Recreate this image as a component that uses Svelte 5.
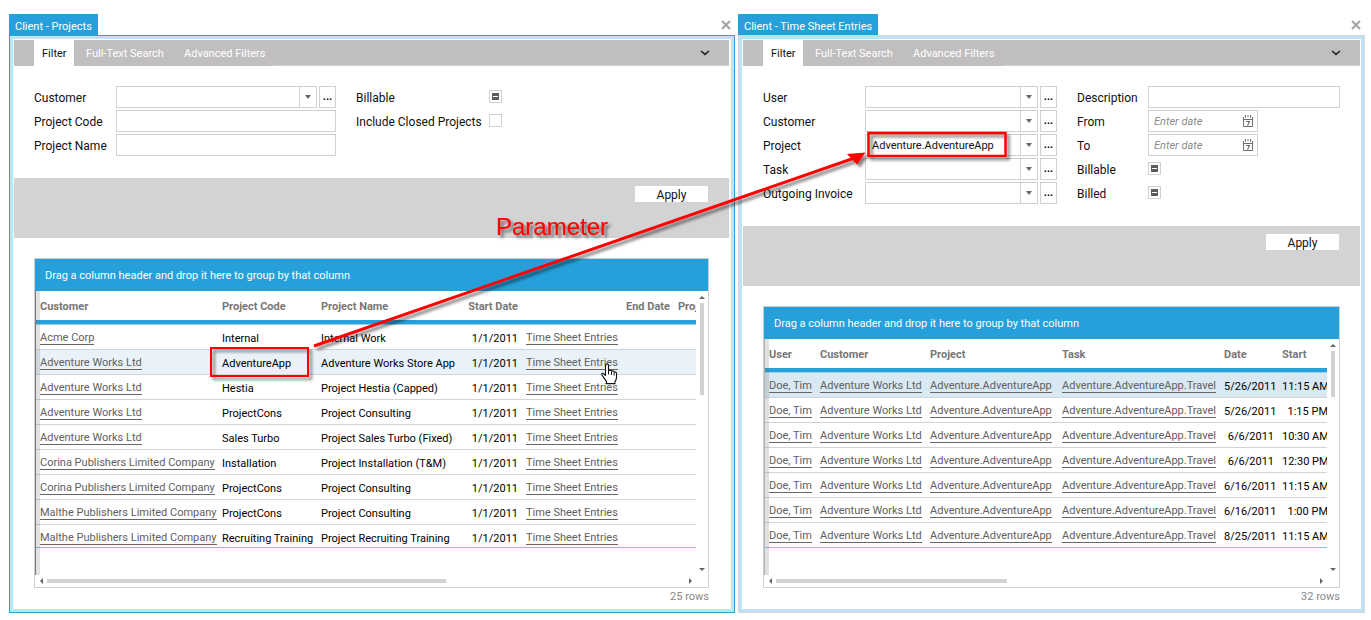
<script>
  const tabs = ['Filter', 'Full-Text Search', 'Advanced Filters'];

  const projectColumns = [
    { title: 'Customer', width: 182, link: true },
    { title: 'Project Code', width: 99 },
    { title: 'Project Name', width: 144 },
    { title: 'Start Date', width: 61, right: true },
    { title: '', width: 97, link: true },
    { title: 'End Date', width: 55, right: true },
    { title: 'Proj', width: 96 }
  ];
  const projectRows = [
    ['Acme Corp', 'Internal', 'Internal Work'],
    ['Adventure Works Ltd', 'AdventureApp', 'Adventure Works Store App'],
    ['Adventure Works Ltd', 'Hestia', 'Project Hestia (Capped)'],
    ['Adventure Works Ltd', 'ProjectCons', 'Project Consulting'],
    ['Adventure Works Ltd', 'Sales Turbo', 'Project Sales Turbo (Fixed)'],
    ['Corina Publishers Limited Company', 'Installation', 'Project Installation (T&M)'],
    ['Corina Publishers Limited Company', 'ProjectCons', 'Project Consulting'],
    ['Malthe Publishers Limited Company', 'ProjectCons', 'Project Consulting'],
    ['Malthe Publishers Limited Company', 'Recruiting Training', 'Project Recruiting Training']
  ].map((r) => [...r, '1/1/2011', 'Time Sheet Entries', '', '']);

  const entryColumns = [
    { title: 'User', width: 51, link: true },
    { title: 'Customer', width: 110, link: true },
    { title: 'Project', width: 132, link: true },
    { title: 'Task', width: 162, link: true },
    { title: 'Date', width: 58, right: true, leftHead: true },
    { title: 'Start', width: 54, right: true, leftHead: true }
  ];
  const entryRows = [
    ['5/26/2011', '11:15 AM'],
    ['5/26/2011', '1:15 PM'],
    ['6/6/2011', '10:30 AM'],
    ['6/6/2011', '12:30 PM'],
    ['6/16/2011', '11:15 AM'],
    ['6/16/2011', '1:00 PM'],
    ['8/25/2011', '11:15 AM']
  ].map((r) => ['Doe, Tim', 'Adventure Works Ltd', 'Adventure.AdventureApp', 'Adventure.AdventureApp.Travel', ...r]);
</script>

{#snippet titleBar(title)}
  <header class="title-bar">
    <h2>{title}</h2>
    <button class="close" aria-label="Close">
      <svg width="10" height="10" viewBox="0 0 10 10"><path d="M1 1l8 8M9 1L1 9" stroke="#a3a3a3" stroke-width="2" /></svg>
    </button>
  </header>
{/snippet}

{#snippet tabStrip()}
  <div class="tabs">
    {#each tabs as tab, i}
      <button class="tab" class:active={i === 0}>{tab}</button>
    {/each}
    <div class="tab-rest">
      <button class="collapse" aria-label="Collapse">
        <svg width="10" height="6" viewBox="0 0 10 6"><path d="M1 1l4 3.4L9 1" fill="none" stroke="#222" stroke-width="1.6" /></svg>
      </button>
    </div>
  </div>
{/snippet}

{#snippet combo(id, label, value)}
  <label for={id}>{label}</label>
  <div class="combo">
    <div class="select">
      <select {id}><option>{value}</option></select>
      <svg class="drop" width="6" height="4" viewBox="0 0 6 4"><path d="M0 0h6L3 4z" fill="#666" /></svg>
    </div>
    <button class="more" aria-label="Browse {label}">...</button>
  </div>
{/snippet}

{#snippet text(id, label)}
  <label for={id}>{label}</label>
  <input {id} class="box" type="text" />
{/snippet}

{#snippet date(id, label)}
  <label for={id}>{label}</label>
  <div class="box date">
    <input {id} type="text" placeholder="Enter date" />
    <button aria-label="Open calendar">
      <svg width="10" height="12" viewBox="0 0 10 12">
        <path d="M.5 2v9.500h9V2M0 4.500h10" fill="none" stroke="#6e6e6e" />
        <path d="M2.500 0v3M5 0v2M7.500 0v3" stroke="#6e6e6e" />
        <path d="M3 6.500h3.500L4.500 10.500" fill="none" stroke="#6e6e6e" stroke-width="1.200" />
      </svg>
    </button>
  </div>
{/snippet}

{#snippet check(id, label, mixed)}
  <label for={id}>{label}</label>
  <input {id} class="check" type="checkbox" indeterminate={mixed} />
{/snippet}

{#snippet grid(columns, rows, highlighted, count, hThumb, vThumb)}
  <div class="grid-wrap">
    <div class="grid">
      <div class="group-bar">Drag a column header and drop it here to group by that column</div>
      <div class="grid-main">
        <div class="viewport">
          <div class="rows">
            <table>
              <colgroup>
                {#each columns as c}<col style:width="{c.width}px" />{/each}
              </colgroup>
              <thead>
                <tr>
                  {#each columns as c}<th class:right={c.right && !c.leftHead}>{c.title}</th>{/each}
                </tr>
              </thead>
              <tbody>
                {#each rows as row, i}
                  <tr class:highlighted={i === highlighted}>
                    {#each row as cell, j}
                      <td class:right={columns[j].right} class:linked={columns[j].link}>
                        {#if columns[j].link}<a href="#top">{cell}</a>{:else}{cell}{/if}
                      </td>
                    {/each}
                  </tr>
                {/each}
              </tbody>
            </table>
          </div>
          <div class="indicator"></div>
        </div>
        <div class="v-scroll">
          <svg width="6" height="3" viewBox="0 0 6 3"><path d="M0 3L3 0l3 3z" fill="#666" /></svg>
          <div class="track"><div class="thumb" style:height="{vThumb}%"></div></div>
          <svg width="6" height="3" viewBox="0 0 6 3"><path d="M0 0h6L3 3z" fill="#666" /></svg>
        </div>
      </div>
      <div class="h-scroll">
        <svg width="3" height="6" viewBox="0 0 3 6"><path d="M3 0v6L0 3z" fill="#666" /></svg>
        <div class="track"><div class="thumb" style:width="{hThumb}%"></div></div>
        <svg width="3" height="6" viewBox="0 0 3 6"><path d="M0 0v6l3-3z" fill="#666" /></svg>
      </div>
    </div>
    <p class="count">{count} rows</p>
  </div>
{/snippet}

<main>
  <section class="panel projects">
    {@render titleBar('Client - Projects')}
    <div class="frame">
      <div class="content">
        {@render tabStrip()}
        <form class="filters">
          <div class="fields">
            {@render combo('p-customer', 'Customer', '')}
            {@render text('p-code', 'Project Code')}
            {@render text('p-name', 'Project Name')}
          </div>
          <div class="fields">
            {@render check('p-billable', 'Billable', true)}
            {@render check('p-closed', 'Include Closed Projects', false)}
          </div>
        </form>
        <div class="actions"><button>Apply</button></div>
        {@render grid(projectColumns, projectRows, 1, 25, 62.5, 35.4)}
      </div>
    </div>
  </section>

  <section class="panel entries">
    {@render titleBar('Client - Time Sheet Entries')}
    <div class="frame">
      <div class="content">
        {@render tabStrip()}
        <form class="filters">
          <div class="fields">
            {@render combo('e-user', 'User', '')}
            {@render combo('e-customer', 'Customer', '')}
            {@render combo('e-project', 'Project', 'Adventure.AdventureApp')}
            {@render combo('e-task', 'Task', '')}
            {@render combo('e-invoice', 'Outgoing Invoice', '')}
          </div>
          <div class="fields">
            {@render text('e-description', 'Description')}
            {@render date('e-from', 'From')}
            {@render date('e-to', 'To')}
            {@render check('e-billable', 'Billable', true)}
            {@render check('e-billed', 'Billed', true)}
          </div>
        </form>
        <div class="actions"><button>Apply</button></div>
        {@render grid(entryColumns, entryRows, 0, 32, 42.8, 21.7)}
      </div>
    </div>
  </section>

  <svg class="annotation" width="1371" height="620" viewBox="0 0 1371 620">
    <defs>
      <filter id="shadow" filterUnits="userSpaceOnUse" x="0" y="0" width="1371" height="620">
        <feDropShadow dx="3" dy="3" stdDeviation="1.500" flood-color="#000" flood-opacity="0.5" />
      </filter>
    </defs>
    <g filter="url(#shadow)">
      <rect x="211" y="348" width="97" height="28" fill="none" stroke="#f00" stroke-width="2" />
      <rect x="868.500" y="133" width="137" height="23" fill="none" stroke="#f00" stroke-width="2.500" />
      <path d="M314 346L853 158.500" stroke="#f00" stroke-width="3" />
      <path d="M847 154l18.500-1.500L857 164.500z" fill="#f00" />
      <text x="496" y="235">Parameter</text>
    </g>
    <path
      d="M605.500 375.500V365.500q0-1.500 1.500-1.500t1.500 1.500v5q2.300-1 3 .6 2.200-.8 2.700 1 2.300-.6 2.300 1.500v4q0 2-1.500 4v2h-8.500v-2l-4.500-6.500q-.8-2.200 1.200-1.800z"
      fill="#fff" stroke="#111" stroke-width="1.100" stroke-linejoin="round" />
    <path d="M608.500 370v4.500M611.500 371.500v3.500M614.200 372.500v3" stroke="#111" fill="none" />
  </svg>
</main>

<style>
  :global(body) {
    background: #fff;
  }
  main {
    position: relative;
    display: flex;
    gap: 3px;
    padding: 14px 6px 7px 9px;
    color: #111;
    font: 11px/16px Roboto, 'Open Sans', sans-serif;
    overflow: hidden;
  }
  main * {
    box-sizing: border-box;
  }
  button,
  input,
  select {
    font: inherit;
    color: inherit;
    border: 0;
    padding: 0;
    margin: 0;
    background: none;
    border-radius: 0;
  }
  svg {
    display: block;
  }
  .panel {
    display: flex;
    flex-direction: column;
    min-width: 0;
  }
  .projects {
    flex: 726 1 0;
    --edge: #34a0d8;
    --strip: #7a7a7a;
  }
  .entries {
    flex: 627 1 0;
    --edge: #d4d4d6;
    --strip: #b4b4b4;
  }
  .title-bar {
    display: flex;
    justify-content: space-between;
    align-items: center;
    height: 21px;
  }
  h2 {
    margin: 0;
    padding: 2px 6px;
    height: 21px;
    line-height: 21px;
    background: #26a0da;
    color: #fff;
    font-size: 11px;
    font-weight: 400;
  }
  .close {
    padding: 0 4px;
  }
  .frame {
    flex: 1;
    border: 1px solid var(--edge);
  }
  .content {
    height: 100%;
    border: 3px solid #bfe2f4;
    padding: 1px;
  }
  .projects .content {
    padding-right: 2px;
  }
  .tabs {
    display: flex;
    height: 26px;
    padding-left: 20px;
    background: #c0bebf;
  }
  .tab {
    min-width: 98px;
    padding: 2px 8px 0 12px;
    color: #fff;
    text-align: left;
    white-space: nowrap;
  }
  .tab.active {
    min-width: 40px;
    padding: 2px 7px 0 8px;
    background: #fff;
    color: #111;
  }
  .tab-rest {
    flex: 1;
    display: flex;
    justify-content: flex-end;
    align-items: center;
    padding-right: 19px;
    border-bottom: 1px solid #d2d2d2;
  }
  .filters {
    display: flex;
    gap: 20px;
    padding: 20px 20px 22px;
    font-size: 12px;
  }
  .fields {
    display: grid;
    grid-auto-rows: 22px;
    align-content: start;
    align-items: center;
    row-gap: 2px;
  }
  .projects .fields:first-child {
    grid-template-columns: 82px 220px;
  }
  .projects .fields:last-child {
    grid-template-columns: 133px 13px;
  }
  .entries .fields:first-child {
    grid-template-columns: 102px 192px;
  }
  .entries .fields:last-child {
    flex: 1;
    grid-template-columns: 71px 1fr;
  }
  label {
    padding-top: 2px;
    white-space: nowrap;
  }
  .box {
    width: 100%;
    height: 22px;
    border: 1px solid #d0d0d0;
    padding: 0 5px;
    font-size: 11px;
  }
  .combo {
    display: flex;
    gap: 2px;
    font-size: 11px;
  }
  .select {
    display: grid;
    grid-template-columns: 1fr 17px;
    align-items: center;
    flex: 1;
    border: 1px solid #d0d0d0;
  }
  .select > * {
    grid-row: 1;
  }
  .drop {
    grid-column: 2;
    justify-self: center;
    pointer-events: none;
  }
  select {
    grid-column: 1 / 3;
    appearance: none;
    width: 100%;
    height: 20px;
    padding: 1px 20px 0 6px;
    background: linear-gradient(#d0d0d0, #d0d0d0) right 16px top / 1px 20px no-repeat;
  }
  .more {
    width: 17px;
    height: 22px;
    border: 1px solid #d0d0d0;
    font-weight: 700;
  }
  .date {
    display: flex;
    align-items: center;
    width: 110px;
    padding-right: 4px;
  }
  .date input {
    flex: 1;
    min-width: 0;
    padding-top: 1px;
  }
  .date input::placeholder {
    color: #8a8a8a;
    font-style: italic;
    opacity: 1;
  }
  .check {
    appearance: none;
    width: 13px;
    height: 13px;
    margin-bottom: 2px;
    border: 1px solid #d0d0d0;
    display: grid;
    place-items: center;
  }
  .check:indeterminate::before {
    content: '';
    width: 7px;
    height: 7px;
    background: linear-gradient(#fff, #fff) center / 5px 1px no-repeat #5c5c5c;
  }
  .actions {
    display: flex;
    justify-content: flex-end;
    align-items: flex-start;
    height: 60px;
    padding: 8px 21px;
    background: #d3d3d3;
  }
  .actions button {
    width: 73px;
    height: 16px;
    background: #fff;
    font-size: 12px;
    line-height: 18px;
  }
  .grid-wrap {
    padding: 20px 20px 3px;
  }
  .grid {
    border: 1px solid #cfcfcf;
  }
  .group-bar {
    height: 32px;
    padding-left: 10px;
    background: #26a0da;
    color: #fff;
    line-height: 34px;
  }
  .grid-main {
    display: flex;
  }
  .viewport {
    position: relative;
    flex: 1;
    min-width: 0;
    padding: 0 0 27px 1px;
    overflow: hidden;
  }
  .rows {
    border-bottom: 1px solid #7cc0e6;
    overflow: hidden;
  }
  .projects .rows {
    height: 257px;
  }
  .entries .rows {
    height: 209px;
  }
  .indicator {
    position: absolute;
    inset: 0 auto 0 0;
    width: 5px;
    border-left: 1px solid var(--strip);
    background: rgba(120, 120, 120, 0.22);
  }
  table {
    table-layout: fixed;
    border-collapse: separate;
    border-spacing: 0;
    width: 0;
  }
  th,
  td {
    padding: 0 4px;
    white-space: nowrap;
    text-align: left;
  }
  th {
    height: 33px;
    padding-top: 2px;
    border-bottom: 4px solid #26a0da;
    color: #777;
    font-weight: 700;
  }
  td {
    height: 25px;
    padding-top: 4px;
    border-bottom: 1px solid #d3d3d3;
    color: #000;
  }
  tbody tr:first-child td {
    height: 26px;
    border-top: 1px solid #9ccfea;
  }
  td.linked {
    padding-top: 0;
  }
  .right {
    text-align: right;
  }
  .highlighted td {
    background: #e9f2f8;
  }
  .entries .highlighted td {
    background: #d8e9f3;
  }
  td a {
    display: inline-block;
    height: 15px;
    border-bottom: 1px solid #666;
    color: #606060;
    line-height: 16px;
    text-decoration: none;
    vertical-align: middle;
  }
  .v-scroll {
    display: flex;
    flex-direction: column;
    align-items: center;
    width: 12px;
    padding: 5px 0 4px;
    gap: 4px;
  }
  .h-scroll {
    display: flex;
    align-items: center;
    height: 12px;
    margin: 0 12px 0 1px;
    padding: 0 4px;
    gap: 4px;
  }
  .track {
    flex: 1;
  }
  .thumb {
    background: #d3d1d2;
  }
  .v-scroll .thumb {
    width: 4px;
  }
  .h-scroll .thumb {
    height: 4px;
  }
  .count {
    margin: 0;
    text-align: right;
    color: #888;
    line-height: 17px;
  }
  .annotation {
    position: absolute;
    left: 0;
    top: 0;
    pointer-events: none;
  }
  .annotation text {
    fill: #f00;
    stroke: #f00;
    stroke-width: 0.2px;
    font: 24px 'Liberation Sans', sans-serif;
  }
</style>
